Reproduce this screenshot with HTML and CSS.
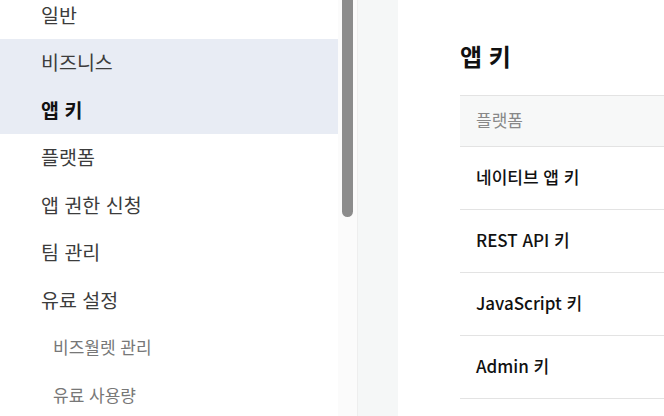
FILE: index.html
```html
<!DOCTYPE html>
<html lang="ko">
<head>
    <meta charset="UTF-8">
    <meta name="viewport" content="width=device-width, initial-scale=1.0">
    <title>앱 키</title>
    <link rel="stylesheet" href="styles.css">
</head>
<body>
    <div class="layout">
        <nav class="sidebar">
            <ul class="menu">
                <li class="menu-item">일반</li>
                <li class="menu-item selected">비즈니스</li>
                <li class="menu-item selected active">앱 키</li>
                <li class="menu-item">플랫폼</li>
                <li class="menu-item">앱 권한 신청</li>
                <li class="menu-item">팀 관리</li>
                <li class="menu-item">유료 설정</li>
                <li class="menu-item sub">비즈월렛 관리</li>
                <li class="menu-item sub">유료 사용량</li>
            </ul>
        </nav>

        <div class="scroll-track">
            <div class="scroll-thumb"></div>
        </div>

        <div class="gutter"></div>

        <main class="content">
            <h1 class="page-title">앱 키</h1>

            <div class="key-table">
                <div class="key-row head">플랫폼</div>
                <div class="key-row">네이티브 앱 키</div>
                <div class="key-row">REST API 키</div>
                <div class="key-row">JavaScript 키</div>
                <div class="key-row">Admin 키</div>
            </div>
        </main>
    </div>
</body>
</html>
```

FILE: styles.css
```css
* {
    box-sizing: border-box;
}

body {
    margin: 0;
    font-family: "Noto Sans CJK KR", "Noto Sans", sans-serif;
    background: #fff;
    color: #333;
    overflow: hidden;
}

.layout {
    display: flex;
    height: 416px;
}

/* left menu */
.sidebar {
    width: 338px;
    flex-shrink: 0;
    overflow: hidden;
}

.menu {
    list-style: none;
    margin: -8.5px 0 0 0;
    padding: 0;
}

.menu-item {
    height: 47.5px;
    display: flex;
    align-items: center;
    padding-left: 41px;
    padding-bottom: 2px;
    font-size: 19.5px;
    color: #3c3c3c;
}

.menu-item.selected {
    background: #e8ecf4;
}

.menu-item.active {
    font-weight: bold;
    color: #111;
}

.menu-item.sub {
    padding-left: 53px;
    font-size: 17px;
    color: #777;
}

/* fake scrollbar */
.scroll-track {
    width: 20px;
    flex-shrink: 0;
    background: #fbfbfb;
    border-right: 1px solid #eeeeee;
    padding: 0 4px;
}

.scroll-thumb {
    height: 217px;
    width: 11px;
    background: #8c8c8c;
    border-radius: 0 0 6px 6px;
}

.gutter {
    width: 40px;
    flex-shrink: 0;
    background: #f5f7f7;
}

/* main content */
.content {
    flex: 1;
    padding: 40px 0 0 62px;
    overflow: hidden;
}

.page-title {
    margin: 0 0 23px 0;
    font-size: 24px;
    line-height: 32px;
    font-weight: bold;
    color: #111;
}

.key-table {
    border-top: 1px solid #e3e3e3;
    width: 400px;
}

.key-row {
    height: 63px;
    display: flex;
    align-items: center;
    padding-left: 16px;
    padding-bottom: 3px;
    border-bottom: 1px solid #e3e3e3;
    font-size: 17px;
    font-weight: 500;
    color: #111;
}

.key-row.head {
    height: 51px;
    background: #f7f8f8;
    font-size: 17px;
    font-weight: normal;
    color: #888;
}
```
